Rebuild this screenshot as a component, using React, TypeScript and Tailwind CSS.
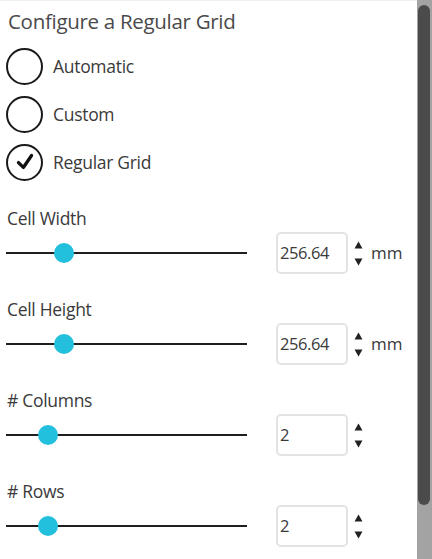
import React from "react";

const font = { fontFamily: '"Open Sans", "Noto Sans", sans-serif' };

function Radio({ label, checked }: { label: string; checked?: boolean }) {
    return (
        <div className="flex items-center h-[48px]">
            <div className="w-[37px] h-[37px] rounded-full border-2 border-[#1a1a1a] flex items-center justify-center ml-[6px]">
                {checked && (
                    <svg width="24" height="24" viewBox="0 0 22 22">
                        <path d="M5 11.5 L9.5 16 L17 5" fill="none" stroke="#111" strokeWidth="3" strokeLinecap="round" strokeLinejoin="round" />
                    </svg>
                )}
            </div>
            <span className="ml-[10px] text-[17.5px] text-[#3a3a3a] tracking-[-0.3px]">{label}</span>
        </div>
    );
}

function SliderRow({ label, value, pos, unit }: { label: string; value: string; pos: number; unit?: string }) {
    return (
        <div className="h-[91px] pt-[6px]">
            <div className="ml-[7px] text-[17.5px] text-[#3a3a3a] h-[24px] leading-[24px] tracking-[-0.3px]">{label}</div>
            <div className="flex items-center mt-[2px]">
                <div className="relative ml-[6px] w-[241px] h-[42px] flex items-center">
                    <div className="w-full h-[2.5px] bg-[#1f1f1f]" />
                    <div
                        className="absolute w-[20px] h-[20px] rounded-full bg-[#22c0dd] top-[11px]"
                        style={{ left: pos - 10 - 6 }}
                    />
                </div>
                <div className="ml-[29px] w-[72px] h-[42px] border-2 border-[#e3e3e3] rounded-[5px] flex items-center pl-[2px] text-[16.5px] text-[#3a3a3a] tracking-[-0.4px]">
                    {value}
                </div>
                <div className="ml-[6px] flex flex-col items-center gap-[9px]">
                    <svg width="9" height="8" viewBox="0 0 9 8"><path d="M4.5 0.5 L8.5 7.5 L0.5 7.5 Z" fill="#222" /></svg>
                    <svg width="9" height="8" viewBox="0 0 9 8"><path d="M0.5 0.5 L8.5 0.5 L4.5 7.5 Z" fill="#222" /></svg>
                </div>
                {unit && <span className="ml-[8px] text-[17px] text-[#3a3a3a]">{unit}</span>}
            </div>
        </div>
    );
}

export default function App() {
    return (
        <div className="w-[432px] h-[559px] bg-white flex overflow-hidden" style={font}>
            <div className="flex-1 border-t border-[#f0f0f0]">
                <div className="ml-[8px] mt-[6px] text-[20.5px] text-[#4a4a4a] tracking-[-0.3px] h-[28px] leading-[28px]">
                    Configure a Regular Grid
                </div>
                <div className="mt-[7px]">
                    <Radio label="Automatic" />
                    <Radio label="Custom" />
                    <Radio label="Regular Grid" checked />
                </div>
                <div className="mt-[14px]">
                    <SliderRow label="Cell Width" value="256.64" pos={64} unit="mm" />
                    <SliderRow label="Cell Height" value="256.64" pos={64} unit="mm" />
                    <SliderRow label="# Columns" value="2" pos={48} />
                    <SliderRow label="# Rows" value="2" pos={48} />
                </div>
            </div>
            <div className="w-[15px] h-full bg-[#a3a3a3] pt-[5px] pl-[1px]">
                <div className="w-[12px] h-[500px] rounded-full bg-[#4b4b4b]" />
            </div>
        </div>
    );
}
